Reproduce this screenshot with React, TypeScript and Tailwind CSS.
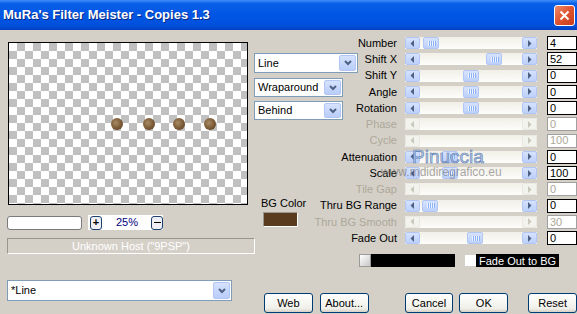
import React from "react";

type Row = { label: string; value: string; thumb?: number; disabled?: boolean };

const rows: Row[] = [
  { label: "Number", value: "4", thumb: 3 },
  { label: "Shift X", value: "52", thumb: 66 },
  { label: "Shift Y", value: "0", thumb: 43 },
  { label: "Angle", value: "0", thumb: 43 },
  { label: "Rotation", value: "0", thumb: 43 },
  { label: "Phase", value: "0", disabled: true },
  { label: "Cycle", value: "100", disabled: true },
  { label: "Attenuation", value: "0", thumb: 22 },
  { label: "Scale", value: "100", thumb: 22 },
  { label: "Tile Gap", value: "0", disabled: true },
  { label: "Thru BG Range", value: "0", thumb: 2 },
  { label: "Thru BG Smooth", value: "30", disabled: true },
  { label: "Fade Out", value: "0", thumb: 47 },
];

const dots = [108, 140, 170, 201];

const Arrow = ({ dir, disabled }: { dir: "l" | "r"; disabled?: boolean }) => (
  <div
    className={`flex h-full w-[15px] items-center justify-center rounded-[2px] border ${
      disabled
        ? "border-[#e9e8e1] bg-[#f3f3ee]"
        : "border-[#b2c6f5] bg-[linear-gradient(to_bottom,#d6e2fd,#bcd0fa)]"
    }`}
  >
    <svg width="5" height="7" viewBox="0 0 5 7">
      <path
        d={dir === "l" ? "M4 0 L0.5 3.5 L4 7 Z" : "M1 0 L4.5 3.5 L1 7 Z"}
        fill={disabled ? "#c9c7ba" : "#4d6185"}
      />
    </svg>
  </div>
);

const Scroll = ({ thumb, disabled }: { thumb?: number; disabled?: boolean }) => (
  <div className="flex h-[12px] w-[132px] bg-[linear-gradient(to_bottom,#f1efe7,#fdfdfa)]">
    <Arrow dir="l" disabled={disabled} />
    <div className="flex flex-1">
      {thumb !== undefined && (
        <>
          <div style={{ width: thumb }} />
          <div className="flex h-full w-[16px] items-center justify-center gap-px rounded-[2px] border border-[#b2c6f5] bg-[linear-gradient(to_bottom,#d6e2fd,#bcd0fa)]">
            {[0, 1, 2, 3].map((i) => (
              <div key={i} className="h-[5px] w-px bg-[#eef4fe] shadow-[1px_0_0_#8cb0f8]" />
            ))}
          </div>
        </>
      )}
    </div>
    <Arrow dir="r" disabled={disabled} />
  </div>
);

const Combo = ({ text, w, h }: { text: string; w: string; h: string }) => (
  <div className={`flex ${w} ${h} items-center border border-[#7f9db9] bg-white p-px`}>
    <span className="flex-1 pl-[2px] text-[11px] text-black">{text}</span>
    <div className="flex h-full w-[17px] items-center justify-center rounded-[2px] border border-[#b2c6f5] bg-[linear-gradient(to_bottom,#d6e2fd,#b9cdf9)]">
      <svg width="8" height="6" viewBox="0 0 8 6">
        <path d="M1 1 L4 4 L7 1" stroke="#4d6185" strokeWidth="2" fill="none" />
      </svg>
    </div>
  </div>
);

const Button = ({ text, className = "" }: { text: string; className?: string }) => (
  <div
    className={`flex h-[20px] w-[49px] items-center justify-center rounded-[3px] border border-[#003c74] bg-[linear-gradient(to_bottom,#ffffff,#f0f0ea_80%,#d6d0c5)] text-[11px] text-black ${className}`}
  >
    {text}
  </div>
);

export default function App() {
  return (
    <div className="relative h-[314px] w-[577px] overflow-hidden bg-[#d4d0c8] font-['Liberation_Sans',Arial,sans-serif]">
      {/* title bar */}
      <div className="flex h-[30px] items-center justify-between bg-[linear-gradient(to_bottom,#3d8ef7_0%,#0a5fe8_12%,#0056e4_50%,#0050dc_85%,#0040c0_100%)] pl-[3px] pr-[2px]">
        <span className="text-[13px] font-bold text-white [text-shadow:1px_1px_0_#0a2a80]">
          MuRa's Filter Meister - Copies 1.3
        </span>
        <div className="flex h-[21px] w-[21px] items-center justify-center rounded-[3px] border border-white bg-[linear-gradient(135deg,#f08a6c,#e0522f_50%,#c53c1c)]">
          <svg width="11" height="11" viewBox="0 0 11 11">
            <path d="M1.5 1.5 L9.5 9.5 M9.5 1.5 L1.5 9.5" stroke="white" strokeWidth="2" />
          </svg>
        </div>
      </div>

      <div className="flex">
        {/* left column */}
        <div className="flex w-[254px] flex-col pl-[8px] pt-[12px]">
          <div className="relative h-[163px] w-[240px] border border-black bg-[image:conic-gradient(#c0c0c0_25%,#ffffff_0_50%,#c0c0c0_0_75%,#ffffff_0)] bg-[length:16px_16px]">
            {dots.map((x) => (
              <div
                key={x}
                className="absolute top-[75px] h-[12px] w-[12px] rounded-full bg-[radial-gradient(circle_at_40%_40%,#a88a62,#7a5a36_55%,#4e3518)]"
                style={{ left: x - 6 }}
              />
            ))}
          </div>

          <div className="mt-[10px] flex h-[15px] items-center">
            <div className="-ml-px h-[14px] w-[75px] rounded-[3px] border border-[#7a7a7a] bg-white" />
            <div className="ml-[6px] flex h-[15px] w-[75px] items-center bg-white pl-[2px]">
              <div className="flex h-[14px] w-[13px] items-center justify-center rounded-[3px] border border-[#1c3f6e] bg-[#eef0f5] text-[11px] font-bold leading-none text-black">
                +
              </div>
              <span className="ml-[14px] text-[11px] text-[#000080]">25%</span>
              <div className="ml-[13px] flex h-[14px] w-[13px] items-center justify-center rounded-[3px] border border-[#1c3f6e] bg-[#eef0f5]">
                <div className="h-px w-[7px] bg-black" />
              </div>
            </div>
          </div>

          <div className="-ml-px mt-[8px] flex h-[16px] w-[248px] items-center justify-center border border-b-white border-l-[#9a968e] border-r-white border-t-[#9a968e] text-[11px] text-white">
            Unknown Host ("9PSP")
          </div>

          <div className="-ml-px mt-[26px]">
            <Combo text="*Line" w="w-[225px]" h="h-[21px]" />
          </div>
        </div>

        {/* right part */}
        <div className="flex w-[323px] flex-col">
          <div className="flex items-start">
            <div className="flex w-[104px] flex-col pt-[23px]">
              <Combo text="Line" w="w-[104px]" h="h-[20px]" />
              <div className="mt-[5px]">
                <Combo text="Wraparound" w="w-[89px]" h="h-[19px]" />
              </div>
              <div className="mt-[4px]">
                <Combo text="Behind" w="w-[89px]" h="h-[19px]" />
              </div>
              <div className="mt-[77px] pl-[7px] text-[11px] leading-[13px] text-black">BG Color</div>
              <div className="ml-[9px] mt-[2px] h-[15px] w-[35px] border border-b-white border-l-[#9a968e] border-r-white border-t-[#9a968e] bg-[#5a3b1e]" />
            </div>

            <div className="flex flex-col pt-[5px]">
              {rows.map((r) => (
                <div key={r.label} className="flex h-[16.25px] items-center">
                  <div className="flex w-[39px] justify-end">
                    <span
                      className={`whitespace-nowrap text-[11px] ${
                        r.disabled ? "text-[#aca899]" : "text-black"
                      }`}
                    >
                      {r.label}
                    </span>
                  </div>
                  <div className="ml-[8px]">
                    <Scroll thumb={r.thumb} disabled={r.disabled} />
                  </div>
                  <div
                    className={`ml-[10px] flex h-[14px] w-[30px] items-center border bg-white pl-[2px] text-[11px] ${
                      r.disabled ? "border-[#a0a0a0] text-[#aca899]" : "border-black text-black"
                    }`}
                  >
                    {r.value}
                  </div>
                </div>
              ))}
            </div>
          </div>

          <div className="ml-[105px] mt-[8px] flex h-[13px] items-center">
            <div className="flex h-[13px] w-[96px] bg-black">
              <div className="h-full w-[12px] border border-[#9a9a9a] bg-[linear-gradient(135deg,#ffffff,#c8c8c8)]" />
            </div>
            <div className="ml-[10px] h-[11px] w-[11px] bg-white" />
            <div className="flex h-[13px] w-[83px] items-center bg-black pl-[3px] text-[11px] text-white">
              Fade Out to BG
            </div>
          </div>

          <div className="mt-[26px] flex">
            <Button text="Web" className="ml-[10px]" />
            <Button text="About..." className="ml-[7px] w-[48px]" />
            <Button text="Cancel" className="ml-[36px]" />
            <Button text="OK" className="ml-[6px]" />
            <Button text="Reset" className="ml-[20px]" />
          </div>
        </div>
      </div>

      {/* watermark */}
      <div className="pointer-events-none absolute left-[412px] top-[147px] text-[19px] leading-none text-[#a9bde0]/80 [-webkit-text-stroke:0.6px_#5f7fb5]">
        Pinuccia
      </div>
      <div className="pointer-events-none absolute left-[381px] top-[166px] text-[12px] leading-none text-[#6e6e6e]/60">
        www.mdidiregrafico.eu
      </div>
    </div>
  );
}
